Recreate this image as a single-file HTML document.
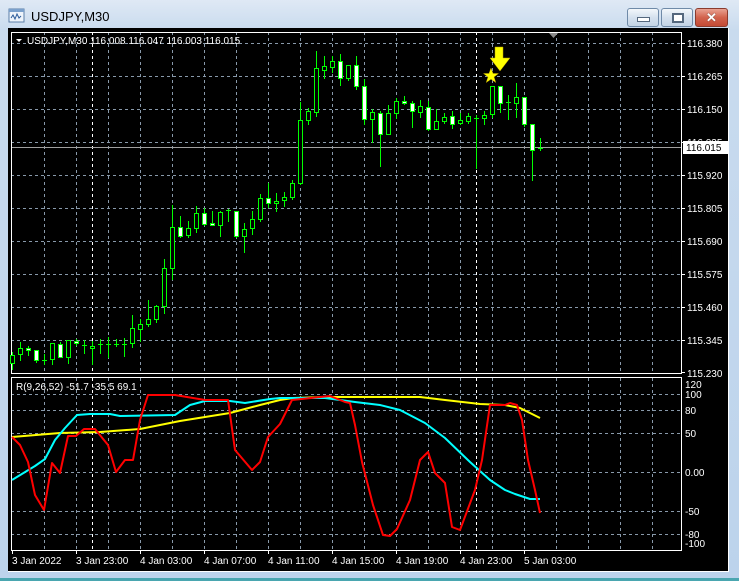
<!DOCTYPE html>
<html><head><meta charset="utf-8"><style>
html,body{margin:0;padding:0;width:739px;height:581px;overflow:hidden;background:#bcd3ec;font-family:"Liberation Sans",sans-serif}
.win{position:absolute;left:0;top:0;width:739px;height:581px;background:linear-gradient(#dfe9f5,#c9dbee 30px,#bcd3ec)}
.title{position:absolute;left:31px;top:9px;font-size:13px;color:#000}
.btn{position:absolute;top:8px;height:17px;border:1px solid #6f8aa8;border-radius:3px;background:linear-gradient(#f3f7fb,#d5e1ee 50%,#c3d3e5)}
.close{background:linear-gradient(#e9a292,#d2634d 50%,#c44a35);border-color:#8a3b2e}
.bottom{position:absolute;left:0;top:578px;width:739px;height:3px;background:#4aa6b0}
</style></head><body>
<div class="win">
<svg style="position:absolute;left:8px;top:8px" width="18" height="16"><rect x="1" y="1" width="15" height="13" fill="#eef4fb" stroke="#5c7fa8"/><rect x="1" y="1" width="15" height="3" fill="#7aa0cc"/><path d="M3 10 l2-3 2 4 2-5 2 4 2-2" stroke="#2a5a9a" fill="none"/></svg>
<div class="title">USDJPY,M30</div>
<div class="btn" style="left:627px;width:30px"><div style="position:absolute;left:9px;top:8px;width:11px;height:3px;background:#fff;border:1px solid #55687e"></div></div>
<div class="btn" style="left:661px;width:30px"><div style="position:absolute;left:10px;top:4px;width:8px;height:6px;border:2px solid #55687e;background:#fff"></div></div>
<div class="btn close" style="left:695px;width:31px"><div style="position:absolute;left:0;top:0;width:31px;text-align:center;color:#fff;font-weight:bold;font-size:13px;line-height:17px;text-shadow:0 0 1px #333">✕</div></div>
<div class="bottom"></div>
<svg style="position:absolute;left:0;top:0" width="739" height="581" font-family="Liberation Sans, sans-serif" font-size="10">
<rect x="8" y="28" width="721" height="544" fill="#000"/>
<line x1="728.5" y1="28" x2="728.5" y2="572" stroke="#fff"/>
<line x1="8" y1="571.5" x2="729" y2="571.5" stroke="#fff"/>
<g stroke="#8899aa" stroke-dasharray="3,3" stroke-width="1">
<path d="M11 43.5H681M11 76.5H681M11 109.5H681M11 142.5H681M11 175.5H681M11 208.5H681M11 241.5H681M11 274.5H681M11 307.5H681M11 340.5H681"/>
<path d="M11 394.5H681M11 410.5H681M11 433.5H681M11 472.5H681M11 511.5H681M11 534.5H681"/>
<path d="M44.5 32V373M76.5 32V373M108.5 32V373M140.5 32V373M172.5 32V373M204.5 32V373M236.5 32V373M268.5 32V373M300.5 32V373M332.5 32V373M364.5 32V373M396.5 32V373M428.5 32V373M460.5 32V373M492.5 32V373M524.5 32V373M556.5 32V373M588.5 32V373M620.5 32V373M652.5 32V373"/>
<path d="M44.5 378V550M76.5 378V550M108.5 378V550M140.5 378V550M172.5 378V550M204.5 378V550M236.5 378V550M268.5 378V550M300.5 378V550M332.5 378V550M364.5 378V550M396.5 378V550M428.5 378V550M460.5 378V550M492.5 378V550M524.5 378V550M556.5 378V550M588.5 378V550M620.5 378V550M652.5 378V550"/>
</g>
<g stroke="#fff" stroke-dasharray="3,3"><path d="M92.5 32V373M476.5 32V373M92.5 378V550M476.5 378V550"/></g>
<line x1="11" y1="147.5" x2="681" y2="147.5" stroke="#a0a0a0"/>
<g fill="none" stroke="#fff"><path d="M11.5 32.5H681.5V373.5H11.5Z"/><path d="M11.5 377.5H681.5V550.5H11.5Z"/></g>
<g stroke="#fff"><path d="M681 43.5h4M681 76.5h4M681 109.5h4M681 142.5h4M681 175.5h4M681 208.5h4M681 241.5h4M681 274.5h4M681 307.5h4M681 340.5h4M681 372.5h4"/>
<path d="M12.5 550v4M76.5 550v4M140.5 550v4M204.5 550v4M268.5 550v4M332.5 550v4M396.5 550v4M460.5 550v4M524.5 550v4"/></g>
<g fill="#fff">
<text x="687" y="47">116.380</text><text x="687" y="80">116.265</text><text x="687" y="113">116.150</text><text x="687" y="146">116.035</text><text x="687" y="179">115.920</text><text x="687" y="212">115.805</text><text x="687" y="245">115.690</text><text x="687" y="278">115.575</text><text x="687" y="311">115.460</text><text x="687" y="344">115.345</text><text x="687" y="377">115.230</text>
<text x="685" y="388">120</text><text x="685" y="398">100</text><text x="685" y="414">80</text><text x="685" y="437">50</text><text x="685" y="476">0.00</text><text x="685" y="515">-50</text><text x="685" y="538">-80</text><text x="685" y="547">-100</text>
<text x="12" y="564">3 Jan 2022</text><text x="76" y="564">3 Jan 23:00</text><text x="140" y="564">4 Jan 03:00</text><text x="204" y="564">4 Jan 07:00</text><text x="268" y="564">4 Jan 11:00</text><text x="332" y="564">4 Jan 15:00</text><text x="396" y="564">4 Jan 19:00</text><text x="460" y="564">4 Jan 23:00</text><text x="524" y="564">5 Jan 03:00</text>
<text x="27" y="44">USDJPY,M30  116.008 116.047 116.003 116.015</text>
<text x="16" y="390">R(9,26,52) -51.7 -35.5 69.1</text>
</g>
<path d="M16 39h6l-3 3z" fill="#fff"/>
<path d="M549 33h9l-4.5 5z" fill="#8a8a8a"/>
<rect x="683" y="141" width="46" height="13" fill="#fff"/>
<text x="686" y="151" fill="#000">116.015</text>
<g id="c" stroke="#00ff00" stroke-width="1" shape-rendering="crispEdges">
<!-- candles -->
<path d="M12.5 352V370M20.5 342V361M28.5 346V356M36.5 350V363M44.5 354V365M52.5 343V365M60.5 342V357M68.5 340V364M76.5 339V346M84.5 340V354M92.5 341V365M100.5 339V354M108.5 337V358M116.5 339V347M124.5 338V357M132.5 315V348M140.5 319V342M148.5 300V327M156.5 305V323M164.5 259V314M172.5 205V280M180.5 216V238M188.5 221V238M196.5 206V233M204.5 208V226M212.5 211V226M220.5 211V237M228.5 209V222M236.5 211V238M244.5 223V253M252.5 211V235M260.5 194V222M268.5 183V208M276.5 193V212M284.5 192V207M292.5 180V200M300.5 102V185M308.5 108V125M316.5 51V117M324.5 56V79M332.5 56V73M340.5 54V86M348.5 65V81M356.5 56V90M364.5 79V125M372.5 109V143M380.5 111V167M388.5 105V135M396.5 98V119M404.5 96V105M412.5 101V128M420.5 100V118M428.5 101V131M436.5 109V130M444.5 113V124M452.5 111V129M460.5 113V125M468.5 113V124M476.5 115V169M484.5 111V125M492.5 86V118M500.5 86V113M508.5 95V120M516.5 83V118M524.5 97V127M532.5 124V181M540.5 138V151"/>
<path d="M42 360.5h5M82 345.5h5M98 344.5h5M106 344.5h5M114 344.5h5M122 344.5h5M226 210.5h5M474 118.5h5M506 102.5h5M538 148.5h5"/>
<g fill="#000">
<rect x="10.5" y="355.5" width="4" height="8"/><rect x="18.5" y="348.5" width="4" height="6"/><rect x="50.5" y="343.5" width="4" height="16"/><rect x="66.5" y="340.5" width="4" height="17"/><rect x="90.5" y="346.5" width="4" height="2"/><rect x="130.5" y="328.5" width="4" height="15"/><rect x="138.5" y="324.5" width="4" height="5"/><rect x="146.5" y="319.5" width="4" height="5"/><rect x="154.5" y="306.5" width="4" height="13"/><rect x="162.5" y="268.5" width="4" height="38"/><rect x="170.5" y="227.5" width="4" height="41"/><rect x="186.5" y="228.5" width="4" height="7"/><rect x="194.5" y="213.5" width="4" height="15"/><rect x="218.5" y="212.5" width="4" height="13"/><rect x="242.5" y="229.5" width="4" height="7"/><rect x="250.5" y="219.5" width="4" height="9"/><rect x="258.5" y="198.5" width="4" height="21"/><rect x="274.5" y="201.5" width="4" height="2"/><rect x="282.5" y="197.5" width="4" height="3"/><rect x="290.5" y="183.5" width="4" height="14"/><rect x="298.5" y="120.5" width="4" height="63"/><rect x="306.5" y="111.5" width="4" height="9"/><rect x="314.5" y="68.5" width="4" height="44"/><rect x="322.5" y="66.5" width="4" height="4"/><rect x="330.5" y="61.5" width="4" height="6"/><rect x="346.5" y="65.5" width="4" height="13"/><rect x="370.5" y="112.5" width="4" height="7"/><rect x="386.5" y="113.5" width="4" height="21"/><rect x="394.5" y="101.5" width="4" height="12"/><rect x="418.5" y="106.5" width="4" height="6"/><rect x="434.5" y="121.5" width="4" height="8"/><rect x="442.5" y="117.5" width="4" height="4"/><rect x="458.5" y="120.5" width="4" height="3"/><rect x="466.5" y="116.5" width="4" height="5"/><rect x="482.5" y="115.5" width="4" height="3"/><rect x="490.5" y="86.5" width="4" height="28"/><rect x="514.5" y="97.5" width="4" height="6"/>
</g>
<g fill="#fff">
<rect x="26.5" y="348.5" width="4" height="2"/><rect x="34.5" y="350.5" width="4" height="10"/><rect x="58.5" y="344.5" width="4" height="13"/><rect x="74.5" y="341.5" width="4" height="2"/><rect x="178.5" y="227.5" width="4" height="9"/><rect x="202.5" y="213.5" width="4" height="11"/><rect x="210.5" y="223.5" width="4" height="2"/><rect x="234.5" y="211.5" width="4" height="25"/><rect x="266.5" y="198.5" width="4" height="5"/><rect x="338.5" y="61.5" width="4" height="17"/><rect x="354.5" y="65.5" width="4" height="21"/><rect x="362.5" y="86.5" width="4" height="33"/><rect x="378.5" y="113.5" width="4" height="21"/><rect x="402.5" y="101.5" width="4" height="2"/><rect x="410.5" y="103.5" width="4" height="8"/><rect x="426.5" y="107.5" width="4" height="22"/><rect x="450.5" y="116.5" width="4" height="8"/><rect x="498.5" y="86.5" width="4" height="17"/><rect x="522.5" y="97.5" width="4" height="27"/><rect x="530.5" y="124.5" width="4" height="26"/>
</g>
</g>
<path d="M495 47h8v11h7l-10 13-10-13h5z" fill="#ffff00" stroke="#b8a000" stroke-width="0.5"/>
<path d="M491 68l2 5.5h5.5l-4.5 3.5 1.8 5.5-4.8-3.3-4.8 3.3 1.8-5.5-4.5-3.5h5.5z" fill="#ffff00" stroke="#b8a000" stroke-width="0.5"/>
<g fill="none" stroke-width="2" stroke-linejoin="round">
<polyline stroke="#ffff00" points="12,437 60,433 100,432 140,429 180,421 230,413 260,405 280,400 293,398 325,397 420,397 445,400 480,404 505,405 520,408 540,418"/>
<polyline stroke="#00ffff" points="12,480 35,466 45,459 55,440 65,428 77,415 90,414 110,414 120,416 175,415 190,405 205,401 230,401 245,403 270,399 280,398 325,398 355,402 380,405 400,410 425,423 445,438 470,462 490,480 505,490 515,494 530,499 540,499"/>
<polyline stroke="#ff0000" points="12,437 20,445 28,462 35,495 44,510 52,463 60,473 68,436 76,436 84,429 95,429 108,445 116,472 125,460 133,460 140,420 148,395 175,395 205,400 228,400 235,450 252,470 260,462 268,437 280,424 292,400 330,396 345,402 350,403 355,425 362,462 373,505 383,535 390,536 397,529 410,500 420,460 428,452 435,473 445,483 452,527 460,530 475,490 482,460 490,405 505,405 510,403 517,405 522,420 528,460 535,490 540,513"/>
</g>
</svg>
</div>
</body></html>
